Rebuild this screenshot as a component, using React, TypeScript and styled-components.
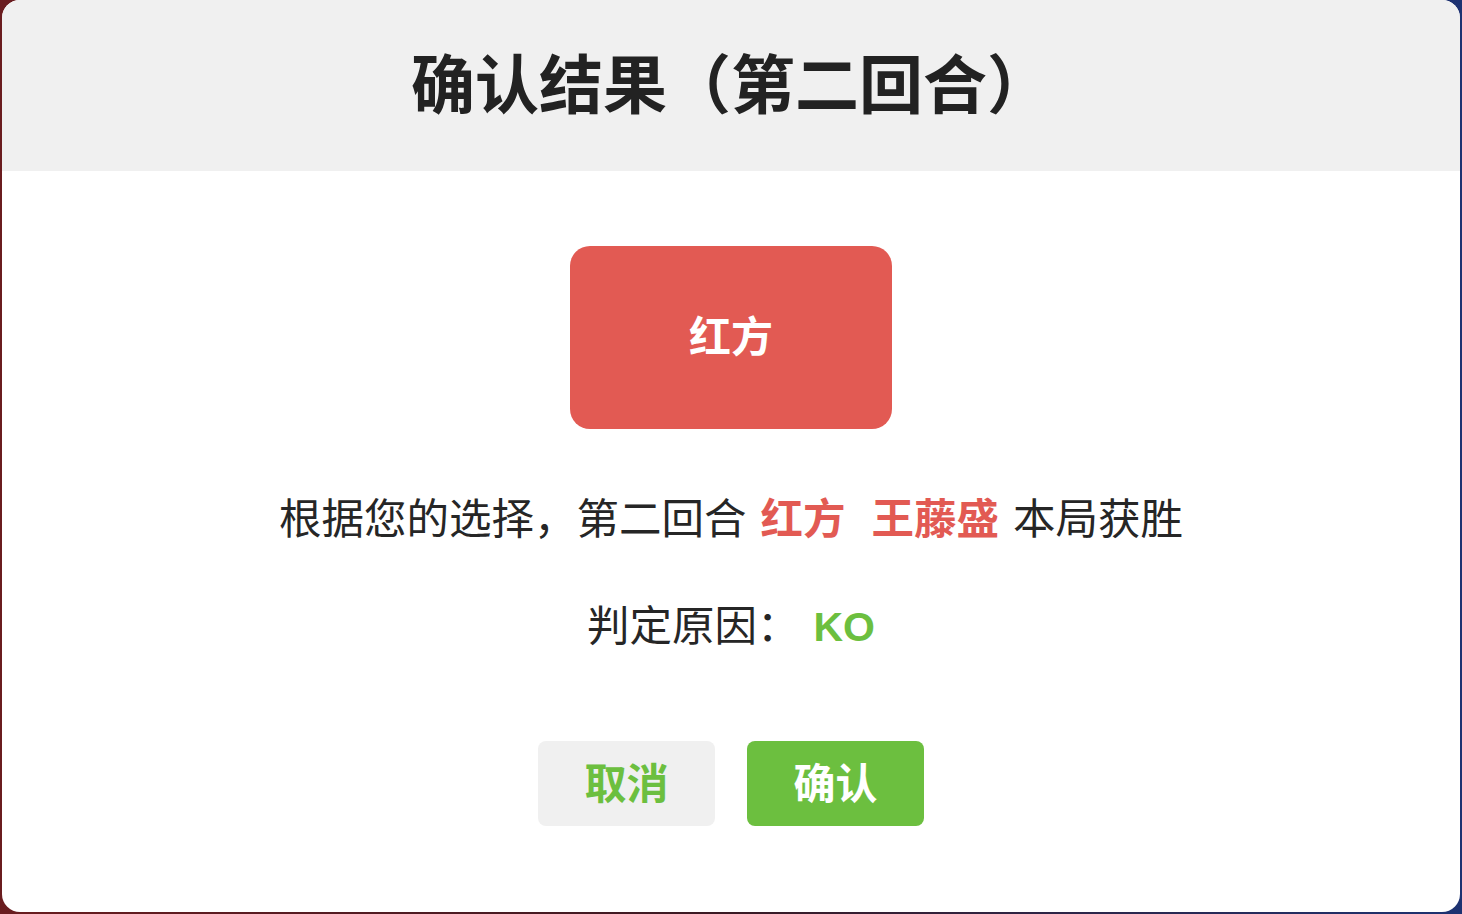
import React from "react";
import styled, { createGlobalStyle } from "styled-components";

const GlobalStyle = createGlobalStyle`
  html, body {
    margin: 0;
    padding: 0;
    width: 100%;
    height: 100%;
    overflow: hidden;
  }
  body {
    background: linear-gradient(90deg, #6a1c1f 0%, #3a1a24 50%, #1d3272 100%);
    font-family: "Noto Sans CJK SC", "Noto Sans", sans-serif;
  }
`;

const Backdrop = styled.div`
  width: 1462px;
  height: 914px;
  box-sizing: border-box;
  padding: 0 2px 2px 2px;
  display: flex;
`;

const Modal = styled.div`
  flex: 1;
  display: flex;
  flex-direction: column;
  background: #ffffff;
  border-radius: 18px;
  overflow: hidden;
`;

const Header = styled.div`
  height: 171px;
  box-sizing: border-box;
  padding-bottom: 12px;
  flex: none;
  background: #f0f0f0;
  display: flex;
  align-items: center;
  justify-content: center;
`;

const Title = styled.h1`
  margin: 0;
  font-size: 64px;
  font-weight: 700;
  color: #222222;
  line-height: 1;
`;

const Body = styled.div`
  flex: 1;
  display: flex;
  flex-direction: column;
  align-items: center;
  padding-top: 75px;
`;

const SideCard = styled.div<{ $bg: string }>`
  width: 322px;
  height: 183px;
  box-sizing: border-box;
  padding-bottom: 8px;
  border-radius: 20px;
  background: ${(p) => p.$bg};
  display: flex;
  align-items: center;
  justify-content: center;
  color: #ffffff;
  font-size: 42px;
  font-weight: 700;
`;

const Line = styled.p<{ $mt: number }>`
  margin: ${(p) => p.$mt}px 0 0 0;
  height: 60px;
  line-height: 60px;
  font-size: 42.5px;
  color: #262626;
  white-space: pre;
`;

const Accent = styled.span<{ $color: string; $ml?: number }>`
  color: ${(p) => p.$color};
  font-weight: 700;
  margin-left: ${(p) => p.$ml ?? 0}px;
`;

const Plain = styled.span`
  margin-left: 14px;
`;

const KO = styled.span`
  color: #6cbf3f;
  font-weight: 700;
  font-size: 41px;
  font-family: "Liberation Sans", "Noto Sans", sans-serif;
  margin-left: 14px;
`;

const Actions = styled.div`
  margin-top: 88px;
  display: flex;
  gap: 32px;
`;

const Button = styled.button<{ $primary?: boolean }>`
  width: 177px;
  height: 85px;
  border: none;
  border-radius: 8px;
  padding: 0 0 7px 0;
  font-family: "Noto Sans CJK SC", sans-serif;
  font-size: 42px;
  font-weight: 700;
  cursor: pointer;
  background: ${(p) => (p.$primary ? "#6cbf3f" : "#f0f0f0")};
  color: ${(p) => (p.$primary ? "#ffffff" : "#6cbf3f")};
`;

export default function App() {
  return (
    <>
      <GlobalStyle />
      <Backdrop>
        <Modal>
          <Header>
            <Title>确认结果（第二回合）</Title>
          </Header>
          <Body>
            <SideCard $bg="#e25a53">红方</SideCard>
            <Line $mt={57}>
              根据您的选择，第二回合
              <Accent $color="#e25a53" $ml={14}>红方</Accent>
              <Accent $color="#e25a53" $ml={26}>王藤盛</Accent>
              <Plain>本局获胜</Plain>
            </Line>
            <Line $mt={47}>
              判定原因：
              <KO>KO</KO>
            </Line>
            <Actions>
              <Button type="button">取消</Button>
              <Button type="button" $primary>确认</Button>
            </Actions>
          </Body>
        </Modal>
      </Backdrop>
    </>
  );
}
